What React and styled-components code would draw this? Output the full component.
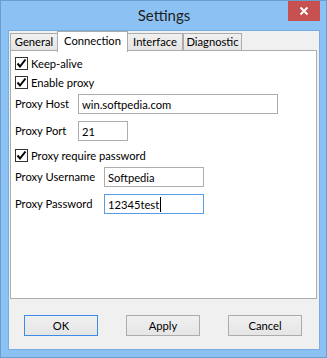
import styled, { createGlobalStyle } from 'styled-components';

const GlobalStyle = createGlobalStyle`
  html, body {
    margin: 0;
    padding: 0;
    background: #ffffff;
  }
  * {
    box-sizing: border-box;
  }
`;

const Window = styled.div`
  width: 327px;
  height: 358px;
  background: #8cc2f3;
  border: 1px solid #6b9dcf;
  display: flex;
  flex-direction: column;
  font-family: Lato, "Liberation Sans", sans-serif;
  font-size: 11.2px;
  color: #000;
  overflow: hidden;
  white-space: nowrap;
`;

const TitleBar = styled.div`
  height: 29px;
  position: relative;
  display: flex;
  align-items: center;
  justify-content: center;
`;

const Title = styled.div`
  font-size: 15px;
  color: #1e1e1e;
  margin-top: -2px;
  margin-left: 1px;
`;

const CloseButton = styled.div`
  position: absolute;
  top: -1px;
  right: 6px;
  width: 32px;
  height: 21px;
  background: #c75050;
  color: #fff;
  display: flex;
  align-items: center;
  justify-content: center;
`;

const Client = styled.div`
  margin: 0 6px 0 7px;
  height: 320px;
  background: #f0f0f0;
  border: 1px solid #79acdf;
  display: flex;
  flex-direction: column;
  padding: 0 1px;
`;

const TabStrip = styled.div`
  display: flex;
  align-items: flex-end;
  height: 20px;
  position: relative;
  z-index: 1;
`;

const Tab = styled.div`
  width: ${(p) => p.$w}px;
  height: ${(p) => (p.$active ? '21px' : '18px')};
  margin: ${(p) => (p.$active ? '0 -1px -1px -1px' : '0')};
  background: ${(p) => (p.$active ? '#ffffff' : 'linear-gradient(#f0f0f0, #e5e5e5)')};
  border: 1px solid #acacac;
  border-bottom: ${(p) => (p.$active ? 'none' : '1px solid #acacac')};
  display: flex;
  align-items: center;
  justify-content: center;
  padding-bottom: ${(p) => (p.$active ? '3px' : '0')};
  color: #000;
  position: relative;
  z-index: ${(p) => (p.$active ? 2 : 1)};
  line-height: 16px;
`;

const Panel = styled.div`
  margin: -1px 1px 0 0;
  height: 249px;
  background: #ffffff;
  border: 1px solid #acacac;
  padding: 3px 0 0 4px;
  display: flex;
  flex-direction: column;
`;

const CheckRow = styled.label`
  height: 19px;
  display: flex;
  align-items: center;
  gap: 3px;
  margin-top: ${(p) => p.$mt || 0}px;
`;

const Box = styled.span`
  width: 13px;
  height: 13px;
  border: 1px solid #333333;
  background: #ffffff;
  display: flex;
  align-items: center;
  justify-content: center;
`;

const FieldRow = styled.div`
  display: flex;
  align-items: flex-start;
  margin-top: ${(p) => p.$mt || 0}px;
`;

const FieldLabel = styled.div`
  width: ${(p) => p.$w}px;
  padding-top: 2px;
  line-height: 16px;
  color: #000;
`;

const TextInput = styled.div`
  width: ${(p) => p.$w}px;
  height: 20px;
  border: 1px solid ${(p) => (p.$focused ? '#569de5' : '#abadb3')};
  background: #fff;
  padding: 1px 0 0 3px;
  display: flex;
  align-items: center;
  line-height: 16px;
`;

const Caret = styled.span`
  display: inline-block;
  width: 1px;
  height: 15px;
  background: #000;
  margin-left: 1px;
`;

const ButtonBar = styled.div`
  display: flex;
  justify-content: space-between;
  padding: 16px 16px 0 14px;
`;

const Button = styled.div`
  width: 74px;
  height: 21px;
  border: 1px solid ${(p) => (p.$default ? '#3c8be6' : '#acacac')};
  background: linear-gradient(#f0f0f0, #e5e5e5);
  display: flex;
  align-items: center;
  justify-content: center;
  color: #000;
`;

const Check = () => (
  <Box>
    <svg width="11" height="11" viewBox="0 0 11 11">
      <path d="M1.5 5.5 L4 8.5 L9.5 1.5" fill="none" stroke="#000" strokeWidth="2" />
    </svg>
  </Box>
);

const CheckItem = ({ label, mt }) => (
  <CheckRow $mt={mt}>
    <Check />
    <span>{label}</span>
  </CheckRow>
);

const Field = ({ label, labelWidth, inputWidth, value, focused, mt }) => (
  <FieldRow $mt={mt}>
    <FieldLabel $w={labelWidth}>{label}</FieldLabel>
    <TextInput $w={inputWidth} $focused={focused}>
      {value}
      {focused && <Caret />}
    </TextInput>
  </FieldRow>
);

export default function App() {
  return (
    <>
      <GlobalStyle />
      <Window>
        <TitleBar>
          <Title>Settings</Title>
          <CloseButton>
            <svg width="10" height="10" viewBox="0 0 10 10">
              <path d="M1.5 1.5 L8.5 8.5 M8.5 1.5 L1.5 8.5" stroke="#fff" strokeWidth="2" />
            </svg>
          </CloseButton>
        </TitleBar>
        <Client>
          <TabStrip>
            <Tab $w={48}>General</Tab>
            <Tab $w={71} $active>Connection</Tab>
            <Tab $w={56}>Interface</Tab>
            <Tab $w={59}>Diagnostic</Tab>
          </TabStrip>
          <Panel>
            <CheckItem label="Keep-alive" mt={0} />
            <CheckItem label="Enable proxy" mt={0} />
            <Field label="Proxy Host" labelWidth={63} inputWidth={200} value="win.softpedia.com" mt={2} />
            <Field label="Proxy Port" labelWidth={63} inputWidth={50} value="21" mt={7} />
            <CheckItem label="Proxy require password" mt={5} />
            <Field label="Proxy Username" labelWidth={89} inputWidth={100} value="Softpedia" mt={2} />
            <Field label="Proxy Password" labelWidth={89} inputWidth={100} value="12345test" focused mt={7} />
          </Panel>
          <ButtonBar>
            <Button $default>OK</Button>
            <Button>Apply</Button>
            <Button>Cancel</Button>
          </ButtonBar>
        </Client>
      </Window>
    </>
  );
}
